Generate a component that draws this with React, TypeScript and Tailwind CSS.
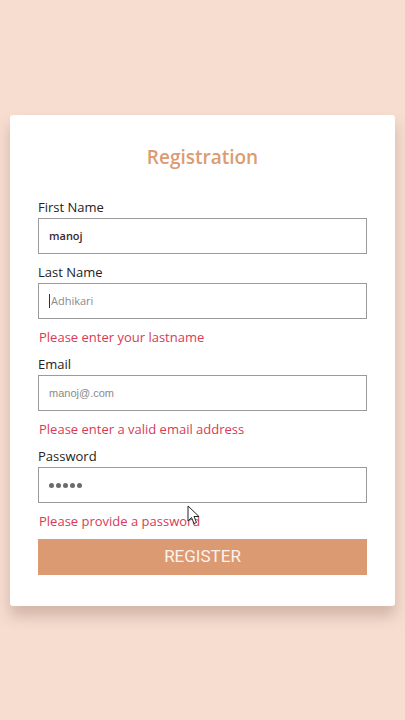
import React from "react";

const label = "block text-[13px] leading-[18px] text-[#222] mb-[2px]";
const input =
  "block w-full h-[36px] border border-[#9a9a9a] bg-white px-[10px] text-[11px] outline-none";
const error = "pl-px text-[13px] leading-[18px] text-[#d93a55]";

function Cursor() {
  return (
    <svg
      className="absolute left-[187px] top-[505px]"
      width="14"
      height="20"
      viewBox="0 0 14 20"
    >
      <path
        d="M1 1 L1 16 L4.5 12.5 L7 18.5 L9.5 17.5 L7 11.5 L12 11.5 Z"
        fill="#fff"
        stroke="#222"
        strokeWidth="1"
        strokeLinejoin="round"
      />
    </svg>
  );
}

export default function App() {
  return (
    <div
      className="relative h-[720px] w-[405px] overflow-hidden bg-[#f6ddd0] pt-[115px] px-[10px]"
      style={{ fontFamily: '"Open Sans", "Noto Sans", sans-serif' }}
    >
      <div className="rounded-[3px] bg-white px-[28px] pt-[28px] pb-[31px] shadow-[0_10px_14px_rgba(120,80,60,0.28)]">
        <h1 className="text-center text-[19px] leading-[28px] font-semibold text-[#dc9b73]">
          Registration
        </h1>

        <form className="mt-[27px] flex flex-col gap-[9px]">
          <div>
            <label className={label}>First Name</label>
            <div className={`${input} flex items-center font-semibold text-[#3a2a30]`}>
              manoj
            </div>
          </div>

          <div>
            <label className={label}>Last Name</label>
            <div className={`${input} flex items-center text-[#8a8a8a]`}>
              <span className="mr-[1px] inline-block h-[14px] w-px bg-[#333]" />
              Adhikari
            </div>
          </div>
          <p className={error}>Please enter your lastname</p>

          <div>
            <label className={label}>Email</label>
            <div
              className={`${input} flex items-center text-[#8a8a8a]`}
              style={{ fontFamily: '"Liberation Sans", Arial, sans-serif' }}
            >
              manoj@.com
            </div>
          </div>
          <p className={error}>Please enter a valid email address</p>

          <div>
            <label className={label}>Password</label>
            <div className={`${input} flex items-center gap-[2px]`}>
              {[0, 1, 2, 3, 4].map((i) => (
                <span key={i} className="inline-block h-[5px] w-[5px] rounded-full bg-[#6b6b6b]" />
              ))}
            </div>
          </div>
          <p className={error}>Please provide a password</p>

          <button
            type="button"
            className="h-[36px] w-full bg-[#dc9a73] text-[17px] text-[#fdf3ec]"
            style={{ fontFamily: 'Roboto, "Liberation Sans", Arial, sans-serif' }}
          >
            REGISTER
          </button>
        </form>
      </div>
      <Cursor />
    </div>
  );
}
